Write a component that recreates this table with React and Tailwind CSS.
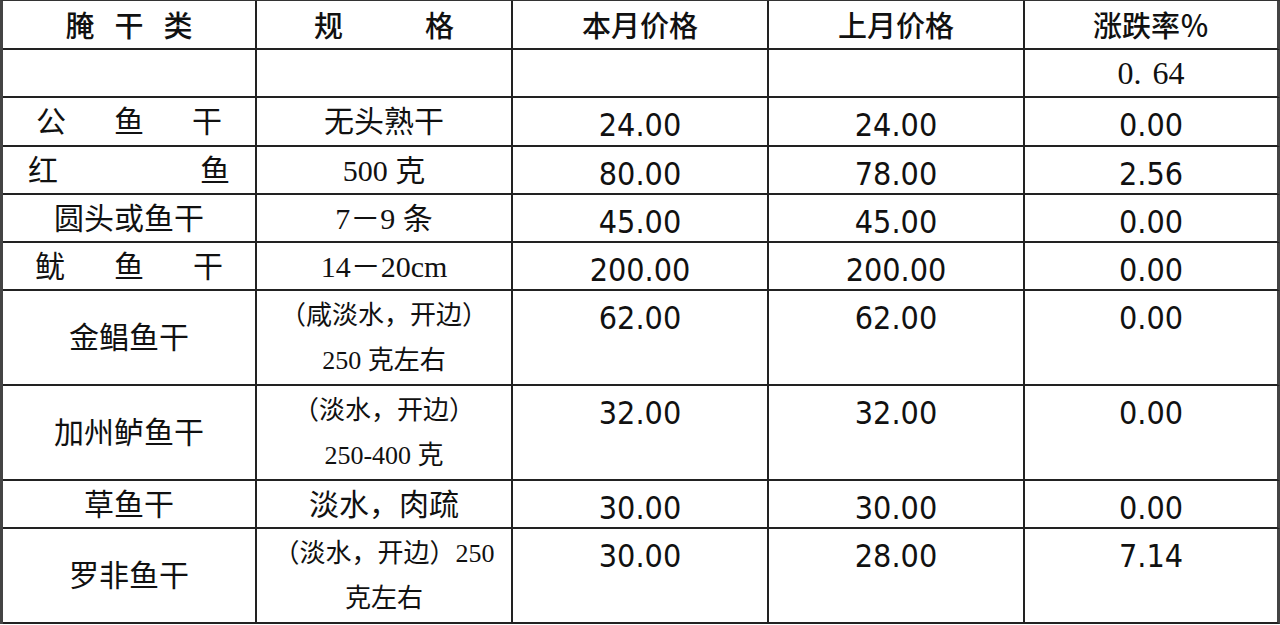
import React from 'react';

const rows = [
  { name: ['公', '鱼', '干'], namePad: 'px-[33px]', spec: ['无头熟干'], cur: '24.00', prev: '24.00', rate: '0.00' },
  { name: ['红', '鱼'], namePad: 'px-[25px]', spec: ['500 克'], cur: '80.00', prev: '78.00', rate: '2.56' },
  { name: ['圆头或鱼干'], spec: ['7－9 条'], cur: '45.00', prev: '45.00', rate: '0.00' },
  { name: ['鱿', '鱼', '干'], namePad: 'px-[32px]', spec: ['14－20cm'], cur: '200.00', prev: '200.00', rate: '0.00' },
  { name: ['金鲳鱼干'], spec: ['（咸淡水，开边）', '250 克左右'], cur: '62.00', prev: '62.00', rate: '0.00' },
  { name: ['加州鲈鱼干'], spec: ['（淡水，开边）', '250-400 克'], cur: '32.00', prev: '32.00', rate: '0.00' },
  { name: ['草鱼干'], spec: ['淡水，肉疏'], cur: '30.00', prev: '30.00', rate: '0.00' },
  { name: ['罗非鱼干'], spec: ['（淡水，开边）250', '克左右'], cur: '30.00', prev: '28.00', rate: '7.14' },
];

const serif = "font-['Liberation_Serif','Noto_Sans_CJK_SC',serif]";
const num = "font-['DejaVu_Sans_Condensed','DejaVu_Sans',sans-serif] font-stretch-condensed text-[32px] leading-[48px] pt-[3px] text-center";
const head = "font-['Noto_Sans_CJK_SC',sans-serif] font-medium text-[29px] text-[#111] flex items-center justify-center";

// one cell of the grid, right and bottom rule drawn by the cell itself
const Cell = ({ last, className = '', children }) => (
  <div className={`border-b-2 ${last ? 'border-r-[3px] border-r-[#444]' : 'border-r-2 border-r-[#222]'} border-b-[#222] ${className}`}>
    {children}
  </div>
);

export default function App() {
  return (
    <div className="w-[1280px] h-[625px] bg-white text-[#111] overflow-hidden">
      <div className="grid grid-cols-[254px_256px_256px_256px_255px] grid-rows-[49px_48px_49px_48px_48px_48px_95px_95px_48px_95px] border-l-[3px] border-l-[#444] border-t border-t-[#333]">
        {/* header */}
        <Cell className={`${head} gap-[20px]`}>
          <span>腌</span><span>干</span><span>类</span>
        </Cell>
        <Cell className={`${head} gap-[82px]`}>
          <span>规</span><span>格</span>
        </Cell>
        <Cell className={head}>本月价格</Cell>
        <Cell className={head}>上月价格</Cell>
        <Cell last className={head}>涨跌率％</Cell>

        {/* empty row with the total rate */}
        <Cell />
        <Cell />
        <Cell />
        <Cell />
        <Cell last className={`${serif} text-[32px] flex items-center justify-center`}>
          <span>0.</span><span className="ml-[11px]">64</span>
        </Cell>

        {rows.map((r, i) => (
          <React.Fragment key={i}>
            <Cell className={`${serif} text-[30px] flex items-center ${r.name.length > 1 ? `justify-between ${r.namePad}` : 'justify-center'}`}>
              {r.name.map((c, j) => <span key={j}>{c}</span>)}
            </Cell>
            <Cell className={`${serif} ${r.spec.length > 1 ? 'text-[26px] leading-[45px]' : 'text-[30px]'} flex flex-col items-center justify-center whitespace-nowrap`}>
              {r.spec.map((s, j) => <div key={j}>{s}</div>)}
            </Cell>
            <Cell className={num}>{r.cur}</Cell>
            <Cell className={num}>{r.prev}</Cell>
            <Cell last className={num}>{r.rate}</Cell>
          </React.Fragment>
        ))}
      </div>
    </div>
  );
}
